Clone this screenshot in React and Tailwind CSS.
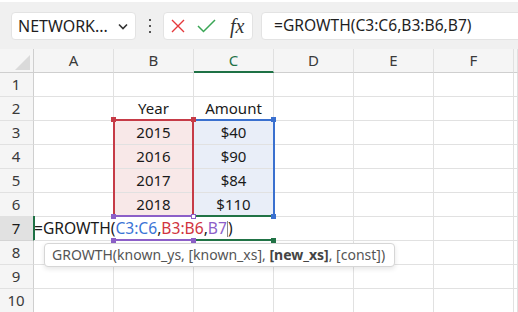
import React from "react";

const COLS = ["A", "B", "C", "D", "E", "F", "G"];

const data = {
  2: { B: "Year", C: "Amount" },
  3: { B: "2015", C: "$40" },
  4: { B: "2016", C: "$90" },
  5: { B: "2017", C: "$84" },
  6: { B: "2018", C: "$110" },
};

function Cell({ r, c }) {
  const inRange = r >= 3 && r <= 6;
  let bg = "bg-white";
  if (inRange && c === "B") bg = "bg-[#f8e8e8]";
  if (inRange && c === "C") bg = "bg-[#e9eef8]";
  const noRight = r === 7 && (c === "A" || c === "B" || c === "C");
  const text = data[r] && data[r][c];
  return (
    <div
      className={`h-[24px] ${bg} border-b border-[#e1e1e1] ${
        noRight ? "" : "border-r"
      } flex items-center justify-center text-[15px] text-[#1a1a1a] leading-none overflow-hidden whitespace-nowrap`}
    >
      {text || ""}
    </div>
  );
}

export default function App() {
  const rows = [1, 2, 3, 4, 5, 6, 7, 8, 9, 10];
  return (
    <div className="relative w-[518px] h-[312px] overflow-hidden bg-white font-['Noto_Sans',sans-serif]">
      {/* Toolbar */}
      <div className="h-[49px] bg-[#f0f0f0] border-t-2 border-white flex items-start pt-[10px] pl-[11px] overflow-hidden">
        <div className="shrink-0 w-[125px] h-[28px] rounded-[4px] bg-white border border-[#e3e3e3] flex items-center justify-between pl-[6px] pr-[7px]">
          <span className="text-[16px] text-[#1f1f1f] leading-none">NETWORK...</span>
          <svg width="10" height="7" viewBox="0 0 10 7">
            <path d="M1 1.5 L5 5.5 L9 1.5" fill="none" stroke="#333" strokeWidth="1.6" />
          </svg>
        </div>
        <div className="shrink-0 w-[27px] h-[28px] flex flex-col items-center justify-center gap-[4px]">
          <span className="w-[2px] h-[2px] bg-[#555]" />
          <span className="w-[2px] h-[2px] bg-[#555]" />
          <span className="w-[2px] h-[2px] bg-[#555]" />
        </div>
        <div className="shrink-0 w-[90px] h-[28px] rounded-[4px] bg-white border border-[#e3e3e3] flex items-center pl-[6px]">
          <svg width="14" height="14" viewBox="0 0 14 14" className="ml-[1px]">
            <path d="M1 1 L13 13 M13 1 L1 13" stroke="#e5383b" strokeWidth="1.4" fill="none" />
          </svg>
          <svg width="19" height="14" viewBox="0 0 19 14" className="ml-[12px]">
            <path d="M1 7 L6.5 12.5 L18 1" stroke="#3aa655" strokeWidth="1.5" fill="none" />
          </svg>
          <span className="ml-[14px] text-[20px] italic leading-none text-[#333] font-['Liberation_Serif',serif]">
            fx
          </span>
        </div>
        <div className="shrink-0 ml-[8px] w-[280px] h-[28px] rounded-l-[4px] bg-white border border-[#e3e3e3] flex items-center pl-[12px]">
          <span className="text-[15.6px] text-[#1f1f1f] leading-none whitespace-nowrap">
            =GROWTH(C3:C6,B3:B6,B7)
          </span>
        </div>
      </div>

      {/* Grid */}
      <div className="grid grid-cols-[34px_repeat(6,80px)_1fr]">
        {/* header row */}
        <div className="relative h-[24px] bg-[#f5f5f5] border-r border-b border-[#cfcfcf]">
          <svg width="34" height="24" viewBox="0 0 34 24" className="absolute left-0 top-0">
            <path d="M30 6 L30 21 L15 21 Z" fill="#dadada" />
          </svg>
        </div>
        {COLS.map((c) => (
          <div
            key={c}
            className={`h-[24px] bg-[#f5f5f5] border-r border-[#e0e0e0] flex items-center justify-center text-[15px] leading-none ${
              c === "C"
                ? "border-b-2 border-b-[#1e7145] text-[#1e7145] pt-[1px]"
                : "border-b border-b-[#cfcfcf] text-[#3a3a3a]"
            }`}
          >
            {c === "G" ? "" : c}
          </div>
        ))}
        {rows.map((r) => (
          <React.Fragment key={r}>
            <div
              className={`h-[24px] border-b border-r flex items-center justify-center pr-[1px] text-[15px] leading-none ${
                r === 7
                  ? "bg-[#e1e1e1] border-r-[#1e7145] border-b-[#d4d4d4] text-[#1a1a1a]"
                  : "bg-[#f5f5f5] border-r-[#cfcfcf] border-b-[#e1e1e1] text-[#3a3a3a]"
              }`}
            >
              {r}
            </div>
            {COLS.map((c) => (
              <Cell key={c} r={r} c={c} />
            ))}
          </React.Fragment>
        ))}
      </div>

      {/* Row 7 editing text */}
      <div className="absolute left-[34px] top-[217px] h-[23px] flex items-center text-[15.6px] leading-none whitespace-nowrap text-[#1a1a1a]">
        <span>=GROWTH(</span>
        <span className="text-[#3b74d6]">C3:C6</span>
        <span>,</span>
        <span className="text-[#d1343f]">B3:B6</span>
        <span>,</span>
        <span className="text-[#8c5fc8]">B7</span>
        <span className="w-[1px] h-[16px] bg-[#8a8a8a]" />
        <span>)</span>
      </div>
      <div className="absolute left-[33px] top-[216px] w-[2px] h-[24px] bg-[#1e7145]" />

      {/* Range highlights */}
      <div className="absolute left-[113px] top-[119px] w-[81px] h-[97px] border-t-2 border-l-2 border-r-2 border-[#c63b47]" />
      <div className="absolute left-[195px] top-[119px] w-[80px] h-[97px] border-t-2 border-r-2 border-[#3a70cf]" />
      <div className="absolute left-[113px] top-[215px] w-[81px] h-[2px] bg-[#8c5fc8]" />
      <div className="absolute left-[113px] top-[239px] w-[81px] h-[2px] bg-[#8c5fc8]" />
      <div className="absolute left-[195px] top-[215px] w-[78px] h-[2px] bg-[#217346]" />
      <div className="absolute left-[195px] top-[239px] w-[78px] h-[2px] bg-[#217346]" />

      {/* Handles */}
      <div className="absolute left-[111px] top-[117px] w-[5px] h-[5px] bg-[#c63b47]" />
      <div className="absolute left-[191px] top-[117px] w-[5px] h-[5px] bg-[#c63b47]" />
      <div className="absolute left-[271px] top-[117px] w-[5px] h-[5px] bg-[#3a70cf]" />
      <div className="absolute left-[111px] top-[214px] w-[5px] h-[5px] bg-[#8c5fc8]" />
      <div className="absolute left-[191px] top-[214px] w-[5px] h-[5px] bg-white border border-[#8c5fc8]" />
      <div className="absolute left-[271px] top-[214px] w-[5px] h-[5px] bg-[#3a70cf]" />
      <div className="absolute left-[111px] top-[238px] w-[5px] h-[5px] bg-[#8c5fc8]" />
      <div className="absolute left-[191px] top-[238px] w-[5px] h-[5px] bg-[#8c5fc8]" />
      <div className="absolute left-[271px] top-[238px] w-[5px] h-[5px] bg-[#217346]" />

      {/* Tooltip */}
      <div className="absolute left-[44px] top-[243px] w-[351px] h-[24px] rounded-[4px] bg-white border border-[#d6d6d6] shadow-[0_2px_5px_rgba(0,0,0,0.1)] flex items-center pl-[7px] text-[14px] leading-none text-[#555] whitespace-nowrap">
        <span>GROWTH(known_ys, [known_xs],&nbsp;</span>
        <span className="font-bold text-[#444]">[new_xs]</span>
        <span>, [const])</span>
      </div>
    </div>
  );
}
